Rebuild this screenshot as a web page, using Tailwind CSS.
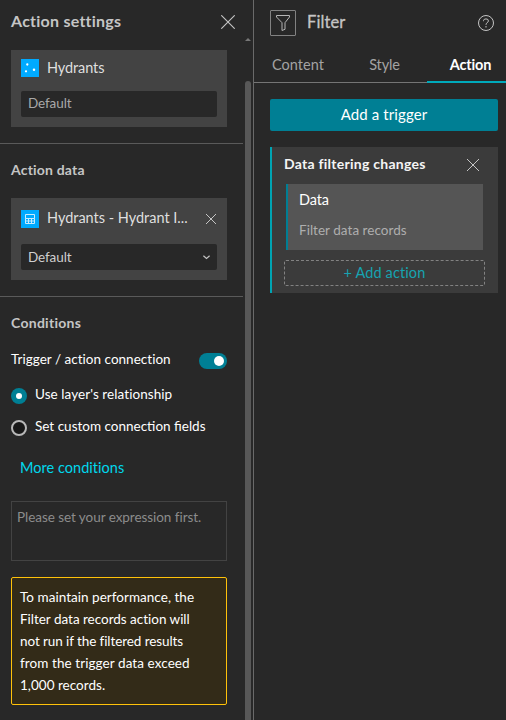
<!DOCTYPE html>
<html lang="en">
<head>
<meta charset="utf-8">
<title>Action settings</title>
<script src="https://cdn.jsdelivr.net/npm/@tailwindcss/browser@4"></script>
</head>
<body class="w-[506px] h-[720px] overflow-hidden bg-[#282828] flex font-[Lato,'Open_Sans',sans-serif] whitespace-nowrap text-[13.5px] leading-5 text-white">

<section class="w-[243px] h-full shrink-0 flex flex-col">
  <header class="h-[50px] shrink-0 pl-[11px] pr-2 flex items-start justify-between">
    <h1 class="mt-[11px] text-[16px] font-bold tracking-[0.24px] text-[#c5c5c5]">Action settings</h1>
    <svg class="mt-[15px] w-[14px] h-[14px]" viewBox="0 0 14 14" fill="none" stroke="#c5c5c5" stroke-width="1.1"><path d="M.3.3l13.4 13.4M13.7.3L.3 13.7"/></svg>
  </header>

  <div class="border-b border-[#5a5a5a] h-[94px] shrink-0 pl-[11px]">
    <div class="w-[216px] h-[77px] bg-[#434343] px-[10px] pt-[9px]">
      <div class="flex h-[18px] items-center">
        <svg class="w-[18px] h-[18px]" viewBox="0 0 18 18"><path fill="#00aaff" d="M0 0h18v18H0z"/><g fill="#fff"><circle cx="6.3" cy="5.5" r="1.15"/><circle cx="13" cy="10.8" r="1.25"/><circle cx="5" cy="12.3" r="1.15"/></g></svg>
        <span class="ml-[8px] -mt-px text-[14.5px] tracking-[-0.09px] text-[#dfdfdf]">Hydrants</span>
      </div>
      <div class="mt-[14px] h-[26px] w-[196px] rounded-xs bg-[#282828] pl-[7px] leading-[25px] tracking-[-0.1px] text-[#a8a8a8]">Default</div>
    </div>
  </div>

  <div class="border-b border-[#5a5a5a] h-[153px] shrink-0 pl-[11px] pt-4">
    <h2 class="text-[14px] font-bold tracking-[0.19px] text-[#c5c5c5]">Action data</h2>
    <div class="mt-[18px] w-[216px] h-[82px] bg-[#434343] px-[10px] pt-3">
      <div class="flex h-[18px] items-center">
        <svg class="w-[18px] h-[18px]" viewBox="0 0 18 18"><path fill="#00aaff" d="M0 0h18v18H0z"/><g fill="none" stroke="#c9ecff"><path d="M4.500 4.500h9v4h-9zM4.500 8.500v5h9v-5M5 11h8M7.500 9v4.500M10.500 9v4.500"/></g></svg>
        <span class="ml-[8px] -mt-[3px] text-[14.5px] tracking-[-0.01px] text-[#dfdfdf]">Hydrants - Hydrant I...</span>
        <svg class="ml-auto mr-px w-[10px] h-[10px]" viewBox="0 0 10 10" fill="none" stroke="#c5c5c5"><path d="M0 0l10 10M10 0L0 10"/></svg>
      </div>
      <div class="mt-4 h-[26px] w-[196px] rounded-xs bg-[#282828] pl-[7px] pr-[7px] flex items-center justify-between tracking-[-0.1px] text-[#cfcfcf]"><span class="-mt-px">Default</span>
        <svg class="w-[7px] h-[5px]" viewBox="0 0 7 5" fill="none" stroke="#c5c5c5" stroke-width="1.2"><path d="M.4.7l3.100 2.700L6.600.7"/></svg></div>
    </div>
  </div>

  <div class="pl-[11px] pt-4 w-[227px] flex flex-col">
    <h2 class="text-[14px] font-bold tracking-[0.28px] text-[#c5c5c5]">Conditions</h2>
    <div class="mt-[17px] h-5 flex justify-between"><span class="-mt-px tracking-[0.02px]">Trigger / action connection</span>
      <span class="mt-[3px] w-7 h-4 rounded-full bg-[#007f94] flex items-center justify-end pr-[3px]"><span class="w-[10px] h-[10px] rounded-full bg-white"></span></span></div>
    <div class="mt-[15px] h-5 flex"><span class="mt-[3px] w-4 h-4 rounded-full bg-[#007f94] flex items-center justify-center"><span class="w-1.5 h-1.5 rounded-full bg-white"></span></span><span class="ml-2 -mt-px tracking-[0.07px]">Use layer's relationship</span></div>
    <div class="mt-3 h-5 flex"><span class="mt-[3px] w-4 h-4 rounded-full border-2 border-[#b8b8b8] bg-[#181818]"></span><span class="ml-2 -mt-px tracking-[0px]">Set custom connection fields</span></div>
    <a class="mt-[21px] ml-[9px] h-5 text-[14.5px] tracking-[0.03px] text-[#00d8ed]">More conditions</a>
    <div class="mt-[23px] h-[60px] border border-[#434343] pl-[5px] pt-[5px] tracking-[-0.05px] text-[#8c8c8c]">Please set your expression first.</div>
    <div class="mt-4 h-[128px] rounded-xs border border-[#ffc20a] bg-[#332b18] pl-2 pt-2 leading-[22px]">
      <div class="tracking-[0.03px]">To maintain performance, the</div>
      <div class="tracking-[-0.02px]">Filter data records action will</div>
      <div class="tracking-[-0.09px]">not run if the filtered results</div>
      <div class="tracking-[0.08px]">from the trigger data exceed</div>
      <div class="tracking-[0.02px]">1,000 records.</div>
    </div>
  </div>
</section>

<div class="w-[10px] shrink-0 pl-[2px] pt-[38px]">
  <svg class="w-1.5 h-[3px] block" viewBox="0 0 6 3"><path fill="#777" d="M3 0l3 3H0z"/></svg>
  <div class="mt-[40px] w-1.5 h-[660px] rounded-t-full bg-[#585858]"></div>
</div>

<section class="flex-1 border-l border-[#6a6a6a] h-full flex flex-col">
  <header class="h-[46px] flex items-center pl-4 pr-3">
    <span class="w-[26px] h-[26px] border border-[#828282] rounded-[1px] flex items-center justify-center">
      <svg class="w-4 h-[18px]" viewBox="0 0 16 18" fill="none" stroke="#b5b5b5" stroke-linejoin="round"><path d="M1.500 1.500h13v1.500L10 8.700v6.600l-3 1.200V8.700L1.500 3z"/></svg></span>
    <h1 class="ml-[11px] -mt-[2px] text-[16.5px] font-normal [-webkit-text-stroke:0.3px_#c5c5c5] tracking-[0.1px] text-[#c5c5c5]">Filter</h1>
    <svg class="ml-auto w-4 h-4" viewBox="0 0 16 16" fill="none" stroke="#c5c5c5"><circle cx="8" cy="8" r="7.500"/><path d="M5.500 6.200V5.600Q5.700 3.900 8 3.900q2.400 0 2.400 2 0 1-1.200 1.800Q8 8.400 8 9.800M8 11v1.500"/></svg>
  </header>
  <nav class="h-[37px] shrink-0 flex text-[14.500px] text-[#a3a3a3]">
    <div class="w-[87px] border-b border-[#757575] text-center pt-[9px] pl-[1px] h-[37px] tracking-[0.020px]">Content</div>
    <div class="w-[86px] border-b border-[#757575] text-center pt-[9px] pl-px h-[37px] tracking-[-0.13px]">Style</div>
    <div class="flex-1 border-b-2 border-[#00aabb] text-center pt-[9px] pl-2 h-[37px] font-bold tracking-[-0.12px] text-white">Action</div>
  </nav>
  <div class="pt-4 pl-4 pr-2">
    <button class="block w-full h-8 rounded-xs bg-[#007f94] pb-[2px] text-[15px] tracking-[0.1px] leading-[30px]">Add a trigger</button>
    <div class="mt-4 h-[146px] border-l-2 border-[#00a4b3] bg-[#3b3b3b] pl-3 pr-[13px]">
      <div class="h-[37px] flex items-start justify-between pt-[7px] pr-[6px]"><h3 class="text-[14px] font-bold tracking-[0.26px] text-[#f5f5f5]">Data filtering changes</h3>
        <svg class="mt-[5px] w-3 h-3" viewBox="0 0 12 12" fill="none" stroke="#c5c5c5"><path d="M0 0l12 12M12 0L0 12"/></svg></div>
      <div class="ml-[2px] mr-[2px] h-[66px] border-l-2 border-[#007f94] bg-[#555] pl-[11px] pt-[6px]">
        <div class="text-[14.500px] tracking-[-0.1px]">Data</div>
        <div class="mt-[10px] tracking-[0.03px] text-[#aeaeae]">Filter data records</div>
      </div>
      <div class="mt-[10px] h-[26px] rounded-xs border border-dashed border-[#828282] text-center text-[14.500px] leading-[23px] tracking-[0.120px] text-[#16a3b1]">+ Add action</div>
    </div>
  </div>
</section>
</body>
</html>
